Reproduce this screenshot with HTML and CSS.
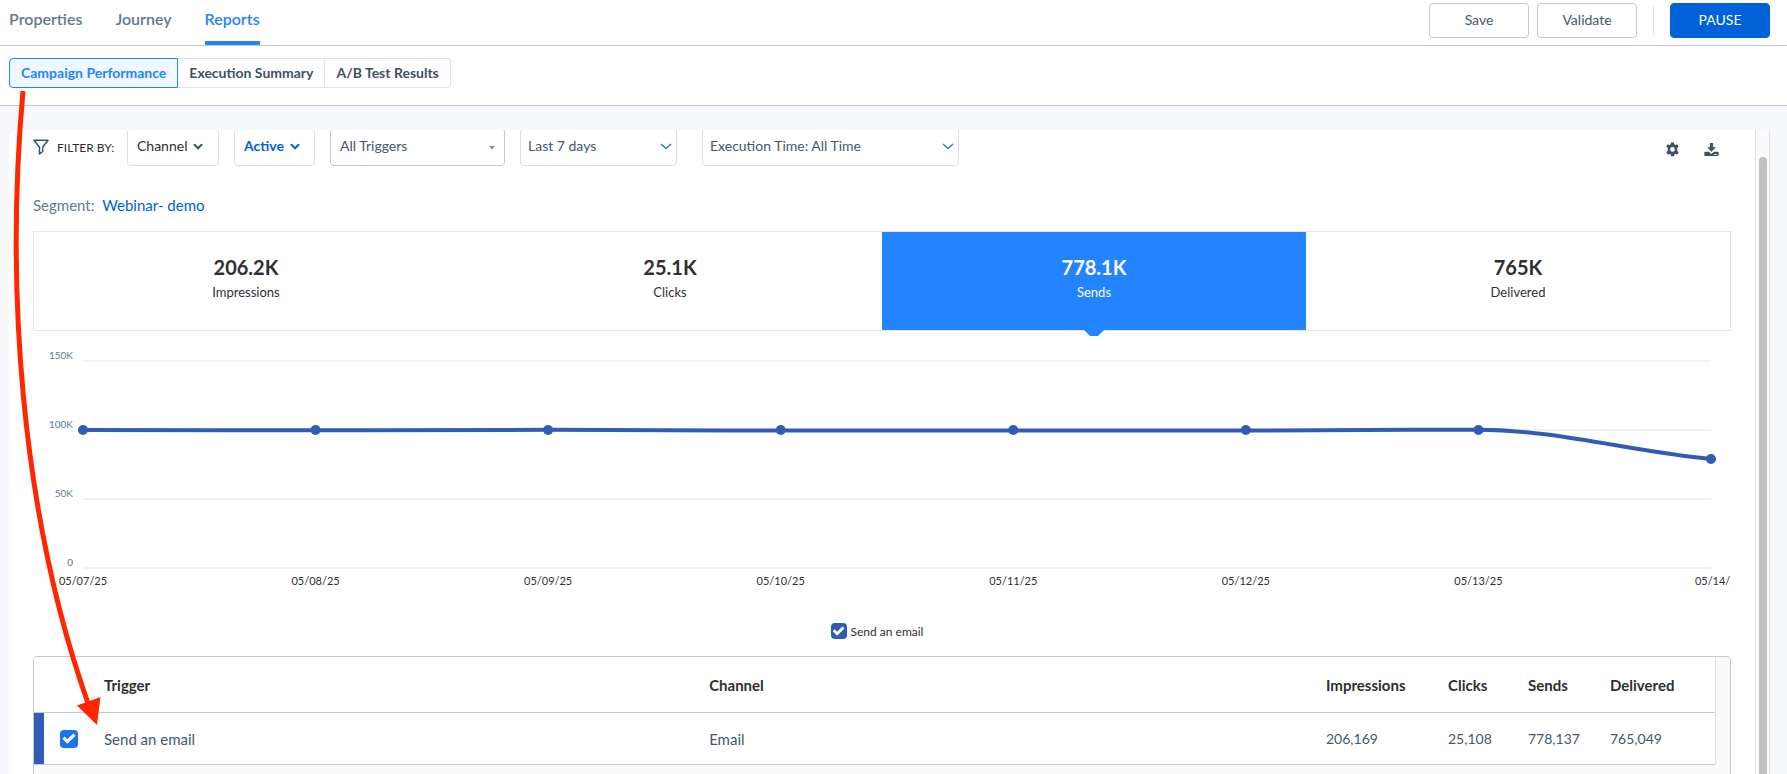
FILE: index.html
```html
<!DOCTYPE html>
<html lang="en">
<head>
<meta charset="utf-8">
<title>Campaign Reports</title>
<meta name="viewport" content="width=device-width, initial-scale=1">
<link rel="stylesheet" href="styles.css">
</head>
<body>
<header class="topbar">
  <nav class="tabs" aria-label="Campaign">
    <a class="tab" href="#properties">Properties</a>
    <a class="tab" href="#journey">Journey</a>
    <a class="tab tab-active" href="#reports">Reports</a>
  </nav>
  <div class="actions">
    <button class="btn" type="button">Save</button>
    <button class="btn" type="button">Validate</button>
    <span class="divider"></span>
    <button class="btn btn-primary" type="button">PAUSE</button>
  </div>
</header>

<nav class="subnav" aria-label="Reports">
  <button class="seg seg-active" type="button">Campaign Performance</button>
  <button class="seg" type="button">Execution Summary</button>
  <button class="seg" type="button">A/B Test Results</button>
</nav>

<main class="page">
  <div class="panel">
    <div class="content">
      <div class="filters">
        <span class="filter-label">
          <svg class="funnel" width="16" height="16" viewBox="0 0 16 16" aria-hidden="true"><path d="M1 1.2h14L9.7 8.2v4.3L6.5 15V8.2z"/></svg>
          FILTER BY:
        </span>
        <button class="drop drop-channel" type="button">Channel
          <svg class="chev" width="10" height="7" viewBox="0 0 10 7" aria-hidden="true"><path d="M1.500 1.800 5 5.300l3.500-3.500"/></svg>
        </button>
        <button class="drop drop-status" type="button">Active
          <svg class="chev" width="10" height="7" viewBox="0 0 10 7" aria-hidden="true"><path d="M1.500 1.800 5 5.300l3.500-3.500"/></svg>
        </button>
        <div class="pick pick-triggers">
          <select aria-label="Triggers"><option>All Triggers</option></select>
          <svg class="caret" width="6" height="4" viewBox="0 0 6 4" aria-hidden="true"><path d="M0 0h6L3 3.6z"/></svg>
        </div>
        <div class="pick pick-range">
          <select aria-label="Date range"><option>Last 7 days</option></select>
          <svg class="thin" width="12" height="7" viewBox="0 0 12 7" aria-hidden="true"><path d="M1 1l5 4.5L11 1"/></svg>
        </div>
        <div class="pick pick-time">
          <select aria-label="Execution time"><option>Execution Time: All Time</option></select>
          <svg class="thin" width="12" height="7" viewBox="0 0 12 7" aria-hidden="true"><path d="M1 1l5 4.5L11 1"/></svg>
        </div>
        <div class="tools">
          <button class="tool" type="button" aria-label="Settings">
            <svg width="15" height="15" viewBox="0 0 14 14" aria-hidden="true"><path fill-rule="evenodd" d="M5.700.4h2.600l.4 1.800 1 .5 1.800-.6 1.300 2.200-1.400 1.300v2.600l1.400 1.300-1.300 2.200-1.800-.6-1 .5-.4 1.800H5.700l-.4-1.800-1-.5-1.800.6-1.300-2.200 1.400-1.300V5.600L1.200 4.300l1.300-2.200 1.800.6 1-.5zM7 4.700a2.200 2.200 0 1 0 0 4.400 2.200 2.200 0 0 0 0-4.400z"/></svg>
          </button>
          <button class="tool" type="button" aria-label="Download">
            <svg width="15" height="15" viewBox="0 0 14 14" aria-hidden="true"><path d="M5.500 1h3v4h2.700L7 9.200 2.800 5h2.700z"/><path fill-rule="evenodd" d="M1 9h3.600L7 11.200 9.400 9H13a.7.700 0 0 1 .7.700v2.600a.7.700 0 0 1-.7.700H1a.7.700 0 0 1-.7-.7V9.700A.7.700 0 0 1 1 9zM9.200 11.200v.7h3.300v-.7z"/></svg>
          </button>
        </div>
      </div>

      <p class="segment">Segment: <a href="#segment">Webinar- demo</a></p>

      <section class="kpis" aria-label="Totals">
        <button class="kpi" type="button"><b>206.2K</b><span>Impressions</span></button>
        <button class="kpi" type="button"><b>25.1K</b><span>Clicks</span></button>
        <button class="kpi kpi-active" type="button"><b>778.1K</b><span>Sends</span></button>
        <button class="kpi" type="button"><b>765K</b><span>Delivered</span></button>
      </section>

      <section class="chart" aria-label="Sends per day">
        <svg class="plot" aria-hidden="true">
          <g class="grid">
            <line x1="0" x2="100%" y1="20" y2="20"/>
            <line x1="0" x2="100%" y1="89" y2="89"/>
            <line x1="0" x2="100%" y1="158" y2="158"/>
            <line x1="0" x2="100%" y1="227" y2="227"/>
          </g>
          <g class="ylabels">
            <text x="-10" y="18">150K</text>
            <text x="-10" y="87">100K</text>
            <text x="-10" y="156">50K</text>
            <text x="-10" y="225">0</text>
          </g>
          <svg width="100%" height="250" viewBox="0 0 1628 250" preserveAspectRatio="none">
            <path class="line" d="M0 89C78 89 155 89.300 232.600 89.300S388 88.800 465 88.800 620 89.500 697.700 89.500 853 89.500 930.300 89.500 1085 89.500 1163 89.500 1318 88.700 1395.400 88.700C1473 88.700 1550 111 1628 118"/>
          </svg>
          <g class="dots">
            <circle cx="0" cy="89" r="5"/>
            <circle cx="14.286%" cy="89" r="5"/>
            <circle cx="28.571%" cy="89" r="5"/>
            <circle cx="42.857%" cy="89" r="5"/>
            <circle cx="57.143%" cy="89" r="5"/>
            <circle cx="71.429%" cy="89" r="5"/>
            <circle cx="85.714%" cy="89" r="5"/>
            <circle cx="100%" cy="118" r="5"/>
          </g>
          <g class="xlabels">
            <text x="0" y="244">05/07/25</text>
            <text x="14.286%" y="244">05/08/25</text>
            <text x="28.571%" y="244">05/09/25</text>
            <text x="42.857%" y="244">05/10/25</text>
            <text x="57.143%" y="244">05/11/25</text>
            <text x="71.429%" y="244">05/12/25</text>
            <text x="85.714%" y="244">05/13/25</text>
            <text x="100%" dx="8" y="244">05/14/25</text>
          </g>
        </svg>
      </section>

      <label class="legend"><input class="check check-series" type="checkbox" checked>Send an email</label>

      <div class="table-box">
        <table class="table">
          <colgroup>
            <col class="col-bar"><col class="col-check"><col class="col-trigger"><col>
            <col class="col-impressions"><col class="col-clicks"><col class="col-sends"><col class="col-delivered">
          </colgroup>
          <thead>
            <tr><th></th><th></th><th>Trigger</th><th>Channel</th><th>Impressions</th><th>Clicks</th><th>Sends</th><th>Delivered</th></tr>
          </thead>
          <tbody>
            <tr>
              <td class="bar"></td>
              <td class="tick"><input class="check check-row" type="checkbox" checked aria-label="Select Send an email"></td>
              <td class="name">Send an email</td><td class="name">Email</td><td>206,169</td><td>25,108</td><td>778,137</td><td>765,049</td>
            </tr>
          </tbody>
        </table>
      </div>
    </div>
    <div class="scroll-track"><div class="scroll-thumb"></div></div>
  </div>
</main>

<svg class="callout" width="110" height="740" viewBox="0 0 110 740" aria-hidden="true">
  <path class="callout-line" d="M23 91C6 280 19 510 89 706"/>
  <path class="callout-head" d="M77 705.500 100.500 697 97 725z"/>
</svg>
</body>
</html>
```
FILE: styles.css
```css
* { box-sizing: border-box; }

body {
  margin: 0;
  height: 100vh;
  overflow: hidden;
  display: flex;
  flex-direction: column;
  background: #fff;
  color: #2e2f32;
  font-family: Lato, "Open Sans", sans-serif;
  font-size: 14px;
}

button, select { font: inherit; color: inherit; margin: 0; }
button { cursor: pointer; }
a { text-decoration: none; }

.topbar {
  flex: none;
  height: 46px;
  padding: 0 17px 0 9px;
  border-bottom: 1px solid #c2c8d5;
  display: flex;
  justify-content: space-between;
}
.tabs { display: flex; gap: 33px; }
.tab {
  height: 45px;
  line-height: 37px;
  font-size: 16px;
  font-weight: 600;
  color: #64798f;
}
.tab-active { color: #2484ff; border-bottom: 4px solid #2484ff; }

.actions { display: flex; align-items: center; gap: 8px; height: 41px; }
.btn {
  width: 100px;
  height: 35px;
  padding: 0 0 3px;
  border: 1px solid #c2c8d5;
  border-radius: 4px;
  background: #fff;
  color: #44586c;
}
.btn-primary { background: #0061d9; border-color: #0061d9; color: #fff; }
.divider { width: 1px; height: 30px; margin: 0 8px; background: #dcdfe8; }

.subnav {
  flex: none;
  height: 60px;
  padding: 12px 9px 0;
  border-bottom: 1px solid #c2c8d5;
  display: flex;
  align-items: flex-start;
}
.seg {
  height: 30px;
  padding: 0 11px 2px;
  border: 1px solid #dfe2ea;
  border-left-width: 0;
  background: #fff;
  color: #3f5164;
  font-weight: 700;
}
.seg:first-child { border-radius: 4px 0 0 4px; }
.seg:last-child { border-radius: 0 4px 4px 0; }
.seg-active { border: 1px solid #2484ff; background: #eff7ff; color: #2484ff; }

.page {
  flex: 1;
  min-height: 0;
  padding: 24px 17px 0 9px;
  background: #f7f8fc;
  display: flex;
}
.panel {
  flex: 1;
  min-width: 0;
  display: flex;
  overflow: hidden;
  background: #fff;
  border-radius: 8px 0 0 0;
}
.content { flex: 1; min-width: 0; padding: 0 24px; }
.scroll-track {
  flex: none;
  width: 15px;
  padding: 27px 2px 0 3px;
  border: solid #e3e3e3;
  border-width: 0 1px;
  background: #fafafa;
}
.scroll-thumb { width: 8px; height: 100%; border-radius: 4px 4px 0 0; background: #c0c0c0; }

/* The scroll position hides the top edge of the filter controls. */
.filters { display: flex; align-items: center; margin-top: -2px; height: 38px; }
.filter-label {
  width: 94px;
  flex: none;
  display: flex;
  align-items: center;
  gap: 8px;
  font-size: 12px;
  white-space: nowrap;
}
.funnel { fill: none; stroke: #3f5164; stroke-width: 1.5; stroke-linejoin: round; }
.drop {
  height: 38px;
  flex: none;
  padding: 0 9px 3px;
  border: 1px solid #dcdfe8;
  border-radius: 4px;
  background: #fff;
  display: flex;
  align-items: center;
  gap: 6px;
}
.drop-channel { width: 92px; margin-right: 15px; }
.drop-status { width: 81px; margin-right: 15px; color: #0061d9; font-weight: 700; }
.chev { margin-top: 2px; fill: none; stroke: #3f5164; stroke-width: 2; stroke-linecap: round; }
.drop-status .chev { stroke: #0061d9; }

.pick { position: relative; flex: none; height: 38px; }
.pick select {
  width: 100%;
  height: 100%;
  padding: 0 24px 3px 7px;
  appearance: none;
  border: 1px solid #dcdfe8;
  border-radius: 4px;
  background: #fff;
  color: #44586c;
}
.pick-triggers { width: 175px; margin-right: 15px; }
.pick-triggers select { padding-left: 9px; border-color: #c2c8d5; }
.pick-range { width: 157px; margin-right: 25px; }
.pick-time { width: 257px; }
.caret { position: absolute; right: 10px; top: 18px; fill: #8a8a8a; }
.thin { position: absolute; right: 5px; top: 15px; fill: none; stroke: #2b7fc7; stroke-width: 1.5; }

.tools { margin-left: auto; display: flex; gap: 24px; padding: 4px 12px 0 0; }
.tool { display: flex; padding: 0; border: 0; background: none; }
.tool svg { fill: #3f5164; }

.segment { margin: 30px 0 0; height: 35px; line-height: 18px; font-size: 15px; color: #64798f; }
.segment a { margin-left: 4px; color: #0061d9; }

.kpis { display: grid; grid-template-columns: repeat(4, 1fr); height: 100px; border: 1px solid #e6e7eb; }
.kpi {
  position: relative;
  padding: 0 0 6px;
  border: 0;
  background: #fff;
  display: flex;
  flex-direction: column;
  align-items: center;
  justify-content: center;
  gap: 2px;
}
.kpi b { font-size: 20px; line-height: 26px; }
.kpi span { font-size: 13px; line-height: 20px; }
.kpi-active { background: #2484ff; color: #fff; }
.kpi-active::after {
  content: "";
  position: absolute;
  top: 100%;
  left: 50%;
  width: 20px;
  height: 6px;
  margin-left: -10px;
  background: #2484ff;
  clip-path: polygon(0 0, 100% 0, 14px 100%, 6px 100%);
}

.chart { margin-top: 10px; padding: 0 20px 0 50px; overflow: hidden; }
.plot { display: block; width: 100%; height: 260px; overflow: visible; }
.grid line { stroke: #f2f2f2; stroke-width: 2; }
.ylabels text { text-anchor: end; font-size: 10px; fill: #64798f; }
.xlabels text { text-anchor: middle; font-size: 11px; fill: #2e2f32; }
.line { fill: none; stroke: #315cb6; stroke-width: 4; vector-effect: non-scaling-stroke; }
.dots circle { fill: #315cb6; }

.legend {
  display: flex;
  align-items: center;
  justify-content: center;
  gap: 4px;
  height: 16px;
  margin: 22px 10px 17px 0;
  font-size: 12px;
}
.check { appearance: none; margin: 0; display: grid; border-radius: 4px; }
.check::before {
  content: "";
  background: #fff;
  clip-path: polygon(14% 52%, 26% 39%, 41% 54%, 74% 22%, 87% 35%, 41% 79%);
}
.check-series { width: 16px; height: 16px; background: #315cb6; }
.check-row { width: 18px; height: 18px; background: #1a73f0; }

.table-box {
  height: 200px;
  padding-right: 14px;
  border: 1px solid #c2c8d5;
  border-radius: 4px 4px 0 0;
  background: #fafafa;
  overflow: hidden;
}
.table {
  width: 100%;
  table-layout: fixed;
  border-collapse: separate;
  border-spacing: 0;
  border-right: 1px solid #dfe2ea;
  background: #fff;
}
.table th, .table td { padding: 0; text-align: left; border-bottom: 1px solid #c2c8d5; }
.table th { height: 56px; font-size: 15px; }
.table td { height: 52px; color: #44586c; }
.table td.name { font-size: 15px; }
.table td.bar { background: #315cb6; }
.table td.tick { padding-left: 16px; }
.col-bar { width: 10px; }
.col-check { width: 60px; }
.col-trigger { width: 36%; }
.col-impressions { width: 122px; }
.col-clicks { width: 80px; }
.col-sends { width: 82px; }
.col-delivered { width: 105px; }

.callout { position: absolute; left: 0; top: 0; pointer-events: none; }
.callout-line { fill: none; stroke: #ff2600; stroke-width: 5; }
.callout-head { fill: #ff2600; }
```
